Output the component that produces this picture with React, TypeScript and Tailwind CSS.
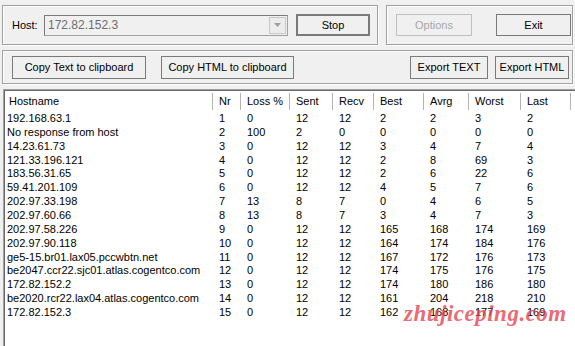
import React from "react";

type Row = [string, string, string, string, string, string, string, string, string];

const rows: Row[] = [
  ["192.168.63.1", "1", "0", "12", "12", "2", "2", "3", "2"],
  ["No response from host", "2", "100", "2", "0", "0", "0", "0", "0"],
  ["14.23.61.73", "3", "0", "12", "12", "3", "4", "7", "4"],
  ["121.33.196.121", "4", "0", "12", "12", "2", "8", "69", "3"],
  ["183.56.31.65", "5", "0", "12", "12", "2", "6", "22", "6"],
  ["59.41.201.109", "6", "0", "12", "12", "4", "5", "7", "6"],
  ["202.97.33.198", "7", "13", "8", "7", "0", "4", "6", "5"],
  ["202.97.60.66", "8", "13", "8", "7", "3", "4", "7", "3"],
  ["202.97.58.226", "9", "0", "12", "12", "165", "168", "174", "169"],
  ["202.97.90.118", "10", "0", "12", "12", "164", "174", "184", "176"],
  ["ge5-15.br01.lax05.pccwbtn.net", "11", "0", "12", "12", "167", "172", "176", "173"],
  ["be2047.ccr22.sjc01.atlas.cogentco.com", "12", "0", "12", "12", "174", "175", "176", "175"],
  ["172.82.152.2", "13", "0", "12", "12", "174", "180", "186", "180"],
  ["be2020.rcr22.lax04.atlas.cogentco.com", "14", "0", "12", "12", "161", "204", "218", "210"],
  ["172.82.152.3", "15", "0", "12", "12", "162", "168", "177", "169"],
];

const headers = ["Hostname", "Nr", "Loss %", "Sent", "Recv", "Best", "Avrg", "Worst", "Last", ""];

const cols = "grid grid-cols-[208px_28px_49px_43px_41px_50px_45px_52px_50px_1fr]";

function Btn({ label, className = "", disabled = false }: { label: string; className?: string; disabled?: boolean }) {
  return (
    <div
      className={`flex items-center justify-center bg-[#f0f0f0] border ${
        disabled ? "border-[#bfbfbf] text-[#a6a6a6]" : "border-[#7a7a7a] text-black"
      } ${className}`}
    >
      {label}
    </div>
  );
}

export default function App() {
  return (
    <div className="w-[575px] h-[346px] overflow-hidden bg-[#f0f0f0] flex flex-col text-[11px] text-black font-['Liberation_Sans',Arial,sans-serif]">
      {/* Top row */}
      <div className="flex pt-[5px] pl-[2px] gap-[8px]">
        <div className="w-[376px] h-[40px] border border-[#a0a0a0] shadow-[inset_1px_1px_0_#fff,1px_1px_0_#fff] flex items-center pl-[9px]">
          <span className="w-[32px]">Host:</span>
          <div className="w-[244px] h-[21px] flex border border-[#a0a0a0] border-t-[#7a7a7a] border-l-[#7a7a7a] bg-[#f0f0f0]">
            <span className="flex-1 pl-[3px] leading-[19px] text-[12px] text-[#6d6d6d]">172.82.152.3</span>
            <div className="w-[17px] m-[1px] border border-[#c8c8c8] bg-[#ececec] flex items-center justify-center">
              <svg width="7" height="4" viewBox="0 0 7 4">
                <path d="M0 0h7L3.5 4z" fill="#a0a0a0" />
              </svg>
            </div>
          </div>
          <Btn label="Stop" className="ml-[8px] w-[74px] h-[22px] border-2 border-[#5f5f5f]" />
        </div>
        <div className="w-[187px] h-[40px] border border-[#a0a0a0] shadow-[inset_1px_1px_0_#fff,1px_1px_0_#fff] flex items-center pl-[9px]">
          <Btn label="Options" disabled className="w-[76px] h-[22px]" />
          <Btn label="Exit" className="ml-[24px] w-[75px] h-[22px]" />
        </div>
      </div>

      {/* Second row */}
      <div className="mt-[5px] ml-[2px] w-[571px] h-[34px] border border-[#a0a0a0] shadow-[inset_1px_1px_0_#fff,1px_1px_0_#fff] flex items-center pl-[9px] pr-[3px]">
        <Btn label="Copy Text to clipboard" className="w-[134px] h-[23px]" />
        <Btn label="Copy HTML to clipboard" className="ml-[15px] w-[133px] h-[23px]" />
        <div className="flex-1" />
        <Btn label="Export TEXT" className="w-[78px] h-[23px]" />
        <Btn label="Export HTML" className="ml-[7px] w-[74px] h-[23px]" />
      </div>

      {/* List */}
      <div className="relative mt-[5px] ml-[3px] flex-1 border-t border-l border-[#a0a0a0]">
        <div className="h-full border-t border-l border-[#696969] bg-white">
          <div className={`${cols} h-[21px] items-center`}>
            {headers.map((h, i) => (
              <div
                key={i}
                className={`h-[17px] leading-[17px] ${i === 0 ? "pl-[4px]" : "pl-[6px]"} ${
                  i < headers.length - 1 ? "border-r border-[#b4b4b4]" : ""
                }`}
              >
                {h}
              </div>
            ))}
          </div>
          {rows.map((r) => (
            <div key={r[1]} className={`${cols} h-[13.86px] leading-[13.86px]`}>
              {r.map((c, i) => (
                <div key={i} className={`whitespace-nowrap ${i === 0 ? "pl-[2px]" : "pl-[6px]"}`}>
                  {c}
                </div>
              ))}
              <div />
            </div>
          ))}
        </div>
        {/* watermark */}
        <div className="absolute left-[400px] top-[207px] text-[23px] italic font-bold text-[#e8404c]/80 font-['Liberation_Serif',serif] tracking-[0.5px]">
          zhujiceping.com
        </div>
      </div>
    </div>
  );
}
